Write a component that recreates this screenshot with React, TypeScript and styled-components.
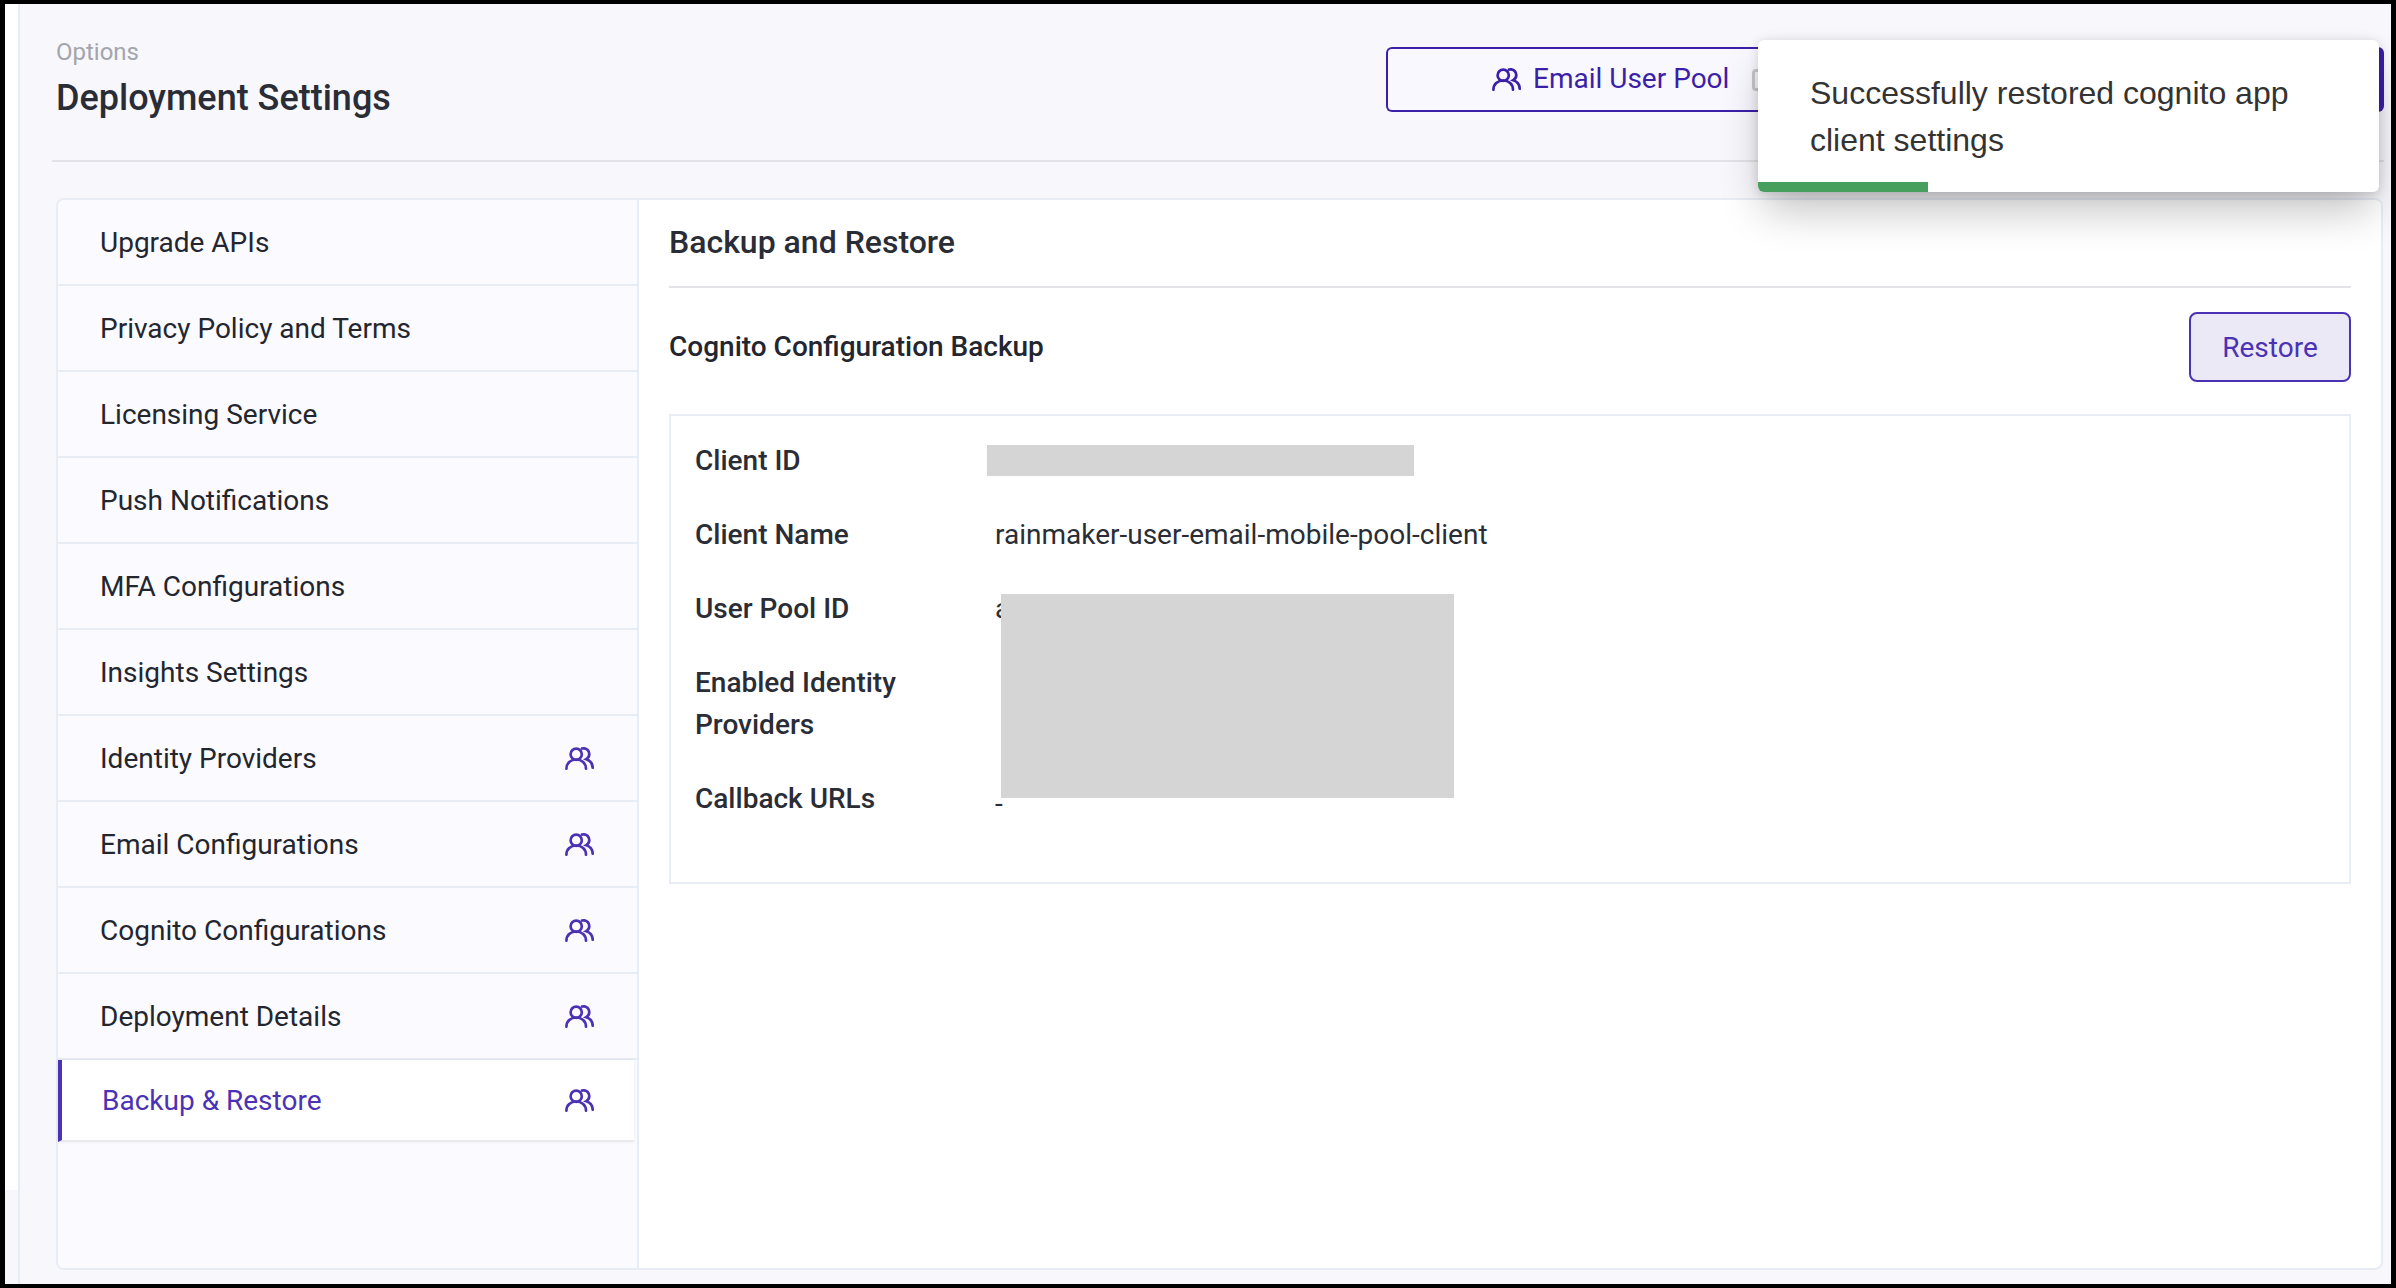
import styled, { createGlobalStyle } from "styled-components";

const GlobalStyle = createGlobalStyle`
  html, body {
    margin: 0;
    padding: 0;
    background: #000;
  }
  * {
    box-sizing: border-box;
  }
  body {
    font-family: Roboto, "Liberation Sans", sans-serif;
    color: #23262f;
  }
`;

const navItems = [
  { label: "Upgrade APIs" },
  { label: "Privacy Policy and Terms" },
  { label: "Licensing Service" },
  { label: "Push Notifications" },
  { label: "MFA Configurations" },
  { label: "Insights Settings" },
  { label: "Identity Providers", users: true },
  { label: "Email Configurations", users: true },
  { label: "Cognito Configurations", users: true },
  { label: "Deployment Details", users: true },
  { label: "Backup & Restore", users: true, active: true },
];

const UsersIcon = () => (
  <svg width="29" height="23" viewBox="0 0 29 23" fill="none" stroke="currentColor" strokeWidth="2.7" strokeLinecap="round">
    <circle cx="11.2" cy="7.2" r="5.6" />
    <path d="M1.4 21.7c0-5.4 4.3-9.2 9.8-9.2s9.8 3.8 9.8 9.2" />
    <path d="M17 1.6c.5-.2 1.1-.3 1.7-.3 3.1 0 5.6 2.6 5.6 5.8 0 2.2-1.2 4.1-3 5.1 3.9 1.3 6.3 4.6 6.4 8.5" />
  </svg>
);

export default function App() {
  return (
    <>
      <GlobalStyle />
      <Frame>
        <Rail />
        <Main>
          <Header>
            <TitleBlock>
              <Crumb>Options</Crumb>
              <Title>Deployment Settings</Title>
            </TitleBlock>
            <PoolSwitch>
              <PoolButton>
                <UsersIcon />
                <PoolLabel>Email User Pool</PoolLabel>
                <GreyMark />
              </PoolButton>
              <PoolButtonFilled />
            </PoolSwitch>
          </Header>
          <Panel>
            <Sidebar>
              {navItems.map((item) => (
                <NavRow key={item.label} $active={item.active}>
                  <span>{item.label}</span>
                  {item.users && (
                    <NavIcon>
                      <UsersIcon />
                    </NavIcon>
                  )}
                </NavRow>
              ))}
            </Sidebar>
            <Content>
              <ContentHeading>Backup and Restore</ContentHeading>
              <SectionRow>
                <SectionTitle>Cognito Configuration Backup</SectionTitle>
                <RestoreButton>Restore</RestoreButton>
              </SectionRow>
              <InfoCard>
                <InfoRow>
                  <InfoLabel>Client ID</InfoLabel>
                  <ClientIdMask />
                </InfoRow>
                <InfoRow>
                  <InfoLabel>Client Name</InfoLabel>
                  <InfoValue>rainmaker-user-email-mobile-pool-client</InfoValue>
                </InfoRow>
                <InfoRow>
                  <InfoLabel>User Pool ID</InfoLabel>
                  <InfoValue>a</InfoValue>
                </InfoRow>
                <InfoRow>
                  <InfoLabel>
                    Enabled Identity
                    <br />
                    Providers
                  </InfoLabel>
                </InfoRow>
                <InfoRow>
                  <InfoLabel>Callback URLs</InfoLabel>
                  <EmptyValue>-</EmptyValue>
                </InfoRow>
                <BlockMask />
              </InfoCard>
            </Content>
          </Panel>
        </Main>
        <Toast>
          <ToastText>Successfully restored cognito app client settings</ToastText>
          <ToastProgress />
        </Toast>
      </Frame>
    </>
  );
}

const Frame = styled.div`
  position: relative;
  display: flex;
  width: 2396px;
  height: 1288px;
  overflow: hidden;
  border: solid #000;
  border-width: 4px 5px 4px 5px;
  background: #f7f7fc;
`;

const Rail = styled.div`
  flex: 0 0 15px;
  border-right: 2px solid #e8ecf5;
  background: linear-gradient(#fff 0 1186px, #f7f7fc 1186px);
`;

const Main = styled.div`
  flex: 1;
  display: flex;
  flex-direction: column;
  min-width: 0;
  padding: 0 7px 0 32px;
`;

const Header = styled.header`
  display: flex;
  justify-content: space-between;
  height: 158px;
  padding: 32px 0 0 4px;
  border-bottom: 2px solid #e2e3e8;
`;

const TitleBlock = styled.div`
  display: flex;
  flex-direction: column;
`;

const Crumb = styled.div`
  font-size: 24px;
  line-height: 32px;
  color: #a3a5ad;
`;

const Title = styled.h1`
  margin: 9px 0 0;
  font-size: 36px;
  line-height: 42px;
  font-weight: 500;
  color: #2a2d36;
`;

const PoolSwitch = styled.div`
  display: flex;
  width: 998px;
  height: 65px;
  margin-top: 11px;
`;

const PoolButton = styled.div`
  flex: 1;
  display: flex;
  align-items: center;
  gap: 12px;
  padding-left: 104px;
  border: 2px solid #3c1fa8;
  border-right: none;
  border-radius: 6px 0 0 6px;
  background: #f9f8fe;
  color: #3c1fa8;
  font-size: 28px;
`;

const PoolLabel = styled.span`
  margin-top: -2px;
`;

const GreyMark = styled.span`
  width: 14px;
  height: 22px;
  margin-left: 11px;
  border: 3px solid #c9c9cf;
  border-radius: 4px;
`;

const PoolButtonFilled = styled.div`
  flex: 0 0 400px;
  border-radius: 0 6px 6px 0;
  background: #3c1fa8;
`;

const Panel = styled.div`
  flex: 0 0 1072px;
  display: flex;
  margin: 36px 1px 0 4px;
  border: 2px solid #e8ecf5;
  border-radius: 8px;
  background: #fff;
`;

const Sidebar = styled.nav`
  flex: 0 0 581px;
  display: flex;
  flex-direction: column;
  padding-top: 1px;
  border-right: 2px solid #e8ecf5;
  border-radius: 6px 0 0 6px;
  background: #fafaff;
`;

const NavRow = styled.div<{ $active?: boolean }>`
  display: flex;
  align-items: center;
  justify-content: space-between;
  flex: 0 0 ${(p) => (p.$active ? "82px" : "86px")};
  padding: 0 43px 0 42px;
  font-size: 28px;
  color: #23262f;
  border-bottom: 2px solid #e8ecf5;
  ${(p) =>
    p.$active &&
    `
    margin-right: 3px;
    padding: 0 40px 0 40px;
    color: #4b32b4;
    border-bottom-color: #e9e9ee;
    border-left: 4px solid #4b32b4;
    background: #fff;
    box-shadow: 0 0 3px rgba(0, 0, 0, 0.08);
  `}
  &:first-child {
    flex-basis: 85px;
  }
`;

const NavIcon = styled.span`
  display: flex;
  color: #4b32b4;
`;

const Content = styled.section`
  flex: 1;
  display: flex;
  flex-direction: column;
  min-width: 0;
  padding: 0 30px;
`;

const ContentHeading = styled.h2`
  display: flex;
  align-items: center;
  flex: 0 0 88px;
  margin: 0;
  padding-bottom: 2px;
  border-bottom: 2px solid #e4e4e8;
  font-size: 32px;
  font-weight: 500;
  color: #2a2d36;
`;

const SectionRow = styled.div`
  display: flex;
  align-items: center;
  justify-content: space-between;
  margin-top: 24px;
`;

const SectionTitle = styled.h3`
  margin: -2px 0 0;
  font-size: 28px;
  font-weight: 500;
  color: #23262f;
`;

const RestoreButton = styled.button`
  width: 162px;
  height: 70px;
  border: 2px solid #4b32b4;
  border-radius: 8px;
  background: #ece9f7;
  color: #4b32b4;
  font-family: inherit;
  font-size: 28px;
`;

const InfoCard = styled.div`
  position: relative;
  height: 470px;
  margin-top: 32px;
  padding: 24px 24px 0;
  border: 2px solid #e8ecf5;
`;

const InfoRow = styled.div`
  display: flex;
  align-items: flex-start;
  margin-bottom: 32px;
  font-size: 28px;
  line-height: 42px;
`;

const InfoLabel = styled.div`
  flex: 0 0 300px;
  font-weight: 500;
  color: #2a2d36;
`;

const InfoValue = styled.div`
  color: #2a2d36;
`;

const EmptyValue = styled(InfoValue)`
  margin-top: 5px;
`;

const ClientIdMask = styled.div`
  width: 427px;
  height: 31px;
  margin: 5px 0 0 -8px;
  background: #d5d5d5;
`;

const BlockMask = styled.div`
  position: absolute;
  left: 330px;
  top: 178px;
  width: 453px;
  height: 204px;
  background: #d5d5d5;
`;

const Toast = styled.div`
  position: absolute;
  left: 1753px;
  top: 36px;
  width: 621px;
  height: 152px;
  padding: 30px 40px 0 52px;
  border-radius: 6px;
  background: #fff;
  box-shadow: 0 1px 10px rgba(0, 0, 0, 0.1), 0 2px 15px rgba(0, 0, 0, 0.05), 0 24px 40px -6px rgba(0, 0, 0, 0.24);
  overflow: hidden;
`;

const ToastText = styled.div`
  font-family: "Liberation Sans", Arial, sans-serif;
  font-size: 32px;
  line-height: 47px;
  color: #333;
`;

const ToastProgress = styled.div`
  position: absolute;
  left: 0;
  bottom: 0;
  width: 170px;
  height: 10px;
  background: #469f5d;
`;
